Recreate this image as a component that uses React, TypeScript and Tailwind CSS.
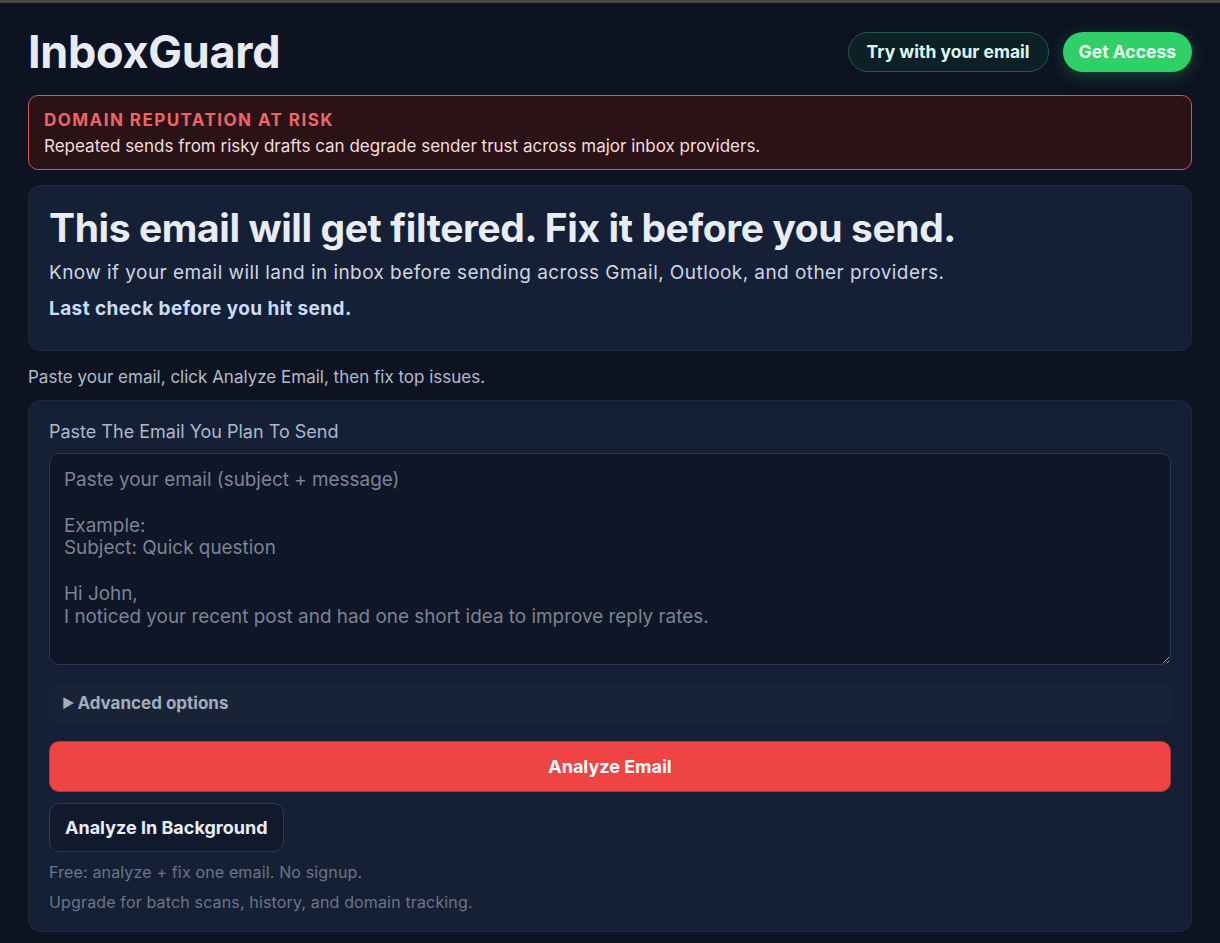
import React from "react";

export default function App() {
  return (
    <div className="min-h-[943px] bg-[#0d1321] font-['Inter',sans-serif] text-[#e5eaf2]">
      <div className="h-[3px] bg-[#4b4747]" />
      <div className="px-[28px] pt-[26px] pb-[11px]">
        <header className="flex items-center justify-between">
          <h1 className="text-[45px] font-bold leading-[46px] tracking-[-0.3px] text-[#e8ebf3]">InboxGuard</h1>
          <div className="flex items-center gap-[14px]">
            <button className="h-[40px] rounded-full border border-[#1f5c54] bg-[#0c2025] px-[18px] text-[17.5px] font-bold text-[#dff5f0]">
              Try with your email
            </button>
            <button className="h-[40px] rounded-full bg-[#2fcf6a] px-[16px] text-[17.5px] font-bold text-[#eefff3] shadow-[0_4px_16px_rgba(34,197,94,0.3)]">
              Get Access
            </button>
          </div>
        </header>

        <div className="mt-[20px] rounded-[10px] border border-[#d65558] bg-[#2a1216] px-[15px] pt-[13px] pb-[12px]">
          <div className="text-[17px] font-bold leading-[22px] tracking-[1.45px] text-[#f26464]">DOMAIN REPUTATION AT RISK</div>
          <div className="mt-[4px] text-[17px] leading-[22px] text-[#f2dede]">
            Repeated sends from risky drafts can degrade sender trust across major inbox providers.
          </div>
        </div>

        <section className="mt-[15px] rounded-[12px] border border-[#1d283b] bg-[#152036] px-[20px] pt-[19px] pb-[28px]">
          <h2 className="text-[39px] font-bold leading-[46px] tracking-[-0.4px] text-[#e8ecf4]">
            This email will get filtered. Fix it before you send.
          </h2>
          <p className="mt-[9px] text-[19px] leading-[26px] tracking-[0.43px] text-[#cdd5e1]">
            Know if your email will land in inbox before sending across Gmail, Outlook, and other providers.
          </p>
          <p className="mt-[10px] text-[19px] font-bold leading-[26px] tracking-[0.42px] text-[#c9dcf6]">Last check before you hit send.</p>
        </section>

        <p className="mt-[15px] text-[17px] leading-[22px] text-[#b3bcc9]">
          Paste your email, click Analyze Email, then fix top issues.
        </p>

        <section className="mt-[12px] rounded-[12px] border border-[#1d283b] bg-[#152036] px-[20px] pt-[20px] pb-[18px]">
          <label className="block text-[18px] leading-[22px] text-[#aeb8c6]">Paste The Email You Plan To Send</label>
          <textarea
            className="mt-[10px] block h-[212px] w-full resize-y rounded-[10px] border border-[#2b3850] bg-[#0f1627] px-[14px] pt-[15px] text-[18.9px] leading-[22.8px] text-[#e5eaf2] placeholder:text-[#7c8493] outline-none"
            placeholder={"Paste your email (subject + message)\n\nExample:\nSubject: Quick question\n\nHi John,\nI noticed your recent post and had one short idea to improve reply rates."}
          />
          <div className="mt-[18px] flex h-[42px] items-center gap-[3px] rounded-[10px] border border-[#1b2538] bg-[#182337] pl-[12px] text-[17px] font-bold text-[#a3aebe]">
            <span className="text-[13px]">▶</span>
            <span>Advanced options</span>
          </div>
          <button className="mt-[16px] block h-[51px] w-full rounded-[10px] border border-[#b93436] bg-[#ef4444] text-[18px] font-bold text-white">
            Analyze Email
          </button>
          <button className="mt-[11px] block h-[49px] rounded-[10px] border border-[#2e3a51] bg-[#111a2c] px-[15px] text-[18px] font-bold text-[#e8edf5]">
            Analyze In Background
          </button>
          <p className="mt-[9px] text-[16px] leading-[22px] tracking-[0.15px] text-[#6c7586]">Free: analyze + fix one email. No signup.</p>
          <p className="mt-[8px] text-[16px] leading-[22px] tracking-[0.15px] text-[#6c7586]">Upgrade for batch scans, history, and domain tracking.</p>
        </section>
      </div>
    </div>
  );
}
